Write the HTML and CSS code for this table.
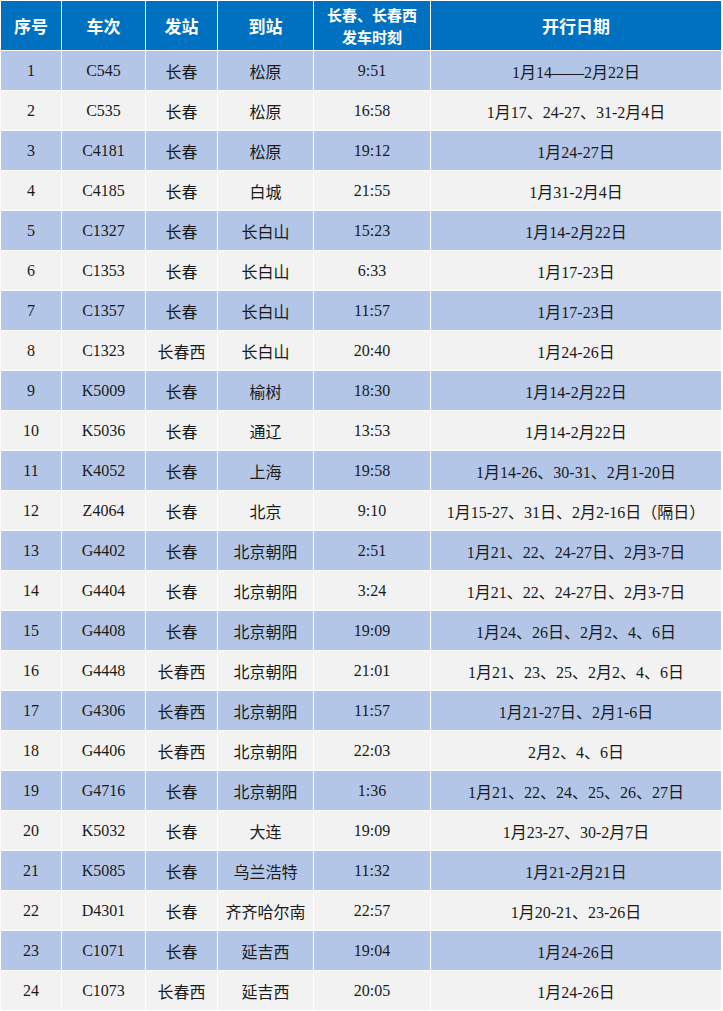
FILE: index.html
```html
<!DOCTYPE html>
<html lang="zh-CN">
<head>
<meta charset="utf-8">
<title>列车时刻</title>
<link rel="stylesheet" href="styles.css">
</head>
<body>
<div class="table">
  <div class="row head">
    <div class="cell">序号</div>
    <div class="cell">车次</div>
    <div class="cell">发站</div>
    <div class="cell">到站</div>
    <div class="cell two"><span class="line">长春、长春西</span><span class="line">发车时刻</span></div>
    <div class="cell">开行日期</div>
  </div>
  <div class="row odd"><div class="cell">1</div><div class="cell">C545</div><div class="cell">长春</div><div class="cell">松原</div><div class="cell">9:51</div><div class="cell">1月14——2月22日</div></div>
  <div class="row even"><div class="cell">2</div><div class="cell">C535</div><div class="cell">长春</div><div class="cell">松原</div><div class="cell">16:58</div><div class="cell">1月17、24-27、31-2月4日</div></div>
  <div class="row odd"><div class="cell">3</div><div class="cell">C4181</div><div class="cell">长春</div><div class="cell">松原</div><div class="cell">19:12</div><div class="cell">1月24-27日</div></div>
  <div class="row even"><div class="cell">4</div><div class="cell">C4185</div><div class="cell">长春</div><div class="cell">白城</div><div class="cell">21:55</div><div class="cell">1月31-2月4日</div></div>
  <div class="row odd"><div class="cell">5</div><div class="cell">C1327</div><div class="cell">长春</div><div class="cell">长白山</div><div class="cell">15:23</div><div class="cell">1月14-2月22日</div></div>
  <div class="row even"><div class="cell">6</div><div class="cell">C1353</div><div class="cell">长春</div><div class="cell">长白山</div><div class="cell">6:33</div><div class="cell">1月17-23日</div></div>
  <div class="row odd"><div class="cell">7</div><div class="cell">C1357</div><div class="cell">长春</div><div class="cell">长白山</div><div class="cell">11:57</div><div class="cell">1月17-23日</div></div>
  <div class="row even"><div class="cell">8</div><div class="cell">C1323</div><div class="cell">长春西</div><div class="cell">长白山</div><div class="cell">20:40</div><div class="cell">1月24-26日</div></div>
  <div class="row odd"><div class="cell">9</div><div class="cell">K5009</div><div class="cell">长春</div><div class="cell">榆树</div><div class="cell">18:30</div><div class="cell">1月14-2月22日</div></div>
  <div class="row even"><div class="cell">10</div><div class="cell">K5036</div><div class="cell">长春</div><div class="cell">通辽</div><div class="cell">13:53</div><div class="cell">1月14-2月22日</div></div>
  <div class="row odd"><div class="cell">11</div><div class="cell">K4052</div><div class="cell">长春</div><div class="cell">上海</div><div class="cell">19:58</div><div class="cell">1月14-26、30-31、2月1-20日</div></div>
  <div class="row even"><div class="cell">12</div><div class="cell">Z4064</div><div class="cell">长春</div><div class="cell">北京</div><div class="cell">9:10</div><div class="cell">1月15-27、31日、2月2-16日（隔日）</div></div>
  <div class="row odd"><div class="cell">13</div><div class="cell">G4402</div><div class="cell">长春</div><div class="cell">北京朝阳</div><div class="cell">2:51</div><div class="cell">1月21、22、24-27日、2月3-7日</div></div>
  <div class="row even"><div class="cell">14</div><div class="cell">G4404</div><div class="cell">长春</div><div class="cell">北京朝阳</div><div class="cell">3:24</div><div class="cell">1月21、22、24-27日、2月3-7日</div></div>
  <div class="row odd"><div class="cell">15</div><div class="cell">G4408</div><div class="cell">长春</div><div class="cell">北京朝阳</div><div class="cell">19:09</div><div class="cell">1月24、26日、2月2、4、6日</div></div>
  <div class="row even"><div class="cell">16</div><div class="cell">G4448</div><div class="cell">长春西</div><div class="cell">北京朝阳</div><div class="cell">21:01</div><div class="cell">1月21、23、25、2月2、4、6日</div></div>
  <div class="row odd"><div class="cell">17</div><div class="cell">G4306</div><div class="cell">长春西</div><div class="cell">北京朝阳</div><div class="cell">11:57</div><div class="cell">1月21-27日、2月1-6日</div></div>
  <div class="row even"><div class="cell">18</div><div class="cell">G4406</div><div class="cell">长春西</div><div class="cell">北京朝阳</div><div class="cell">22:03</div><div class="cell">2月2、4、6日</div></div>
  <div class="row odd"><div class="cell">19</div><div class="cell">G4716</div><div class="cell">长春</div><div class="cell">北京朝阳</div><div class="cell">1:36</div><div class="cell">1月21、22、24、25、26、27日</div></div>
  <div class="row even"><div class="cell">20</div><div class="cell">K5032</div><div class="cell">长春</div><div class="cell">大连</div><div class="cell">19:09</div><div class="cell">1月23-27、30-2月7日</div></div>
  <div class="row odd"><div class="cell">21</div><div class="cell">K5085</div><div class="cell">长春</div><div class="cell">乌兰浩特</div><div class="cell">11:32</div><div class="cell">1月21-2月21日</div></div>
  <div class="row even"><div class="cell">22</div><div class="cell">D4301</div><div class="cell">长春</div><div class="cell">齐齐哈尔南</div><div class="cell">22:57</div><div class="cell">1月20-21、23-26日</div></div>
  <div class="row odd"><div class="cell">23</div><div class="cell">C1071</div><div class="cell">长春</div><div class="cell">延吉西</div><div class="cell">19:04</div><div class="cell">1月24-26日</div></div>
  <div class="row even"><div class="cell">24</div><div class="cell">C1073</div><div class="cell">长春西</div><div class="cell">延吉西</div><div class="cell">20:05</div><div class="cell">1月24-26日</div></div>
</div>
</body>
</html>
```
FILE: styles.css
```css
html, body {
  margin: 0;
  padding: 0;
  background: #ffffff;
}

.table {
  width: 722px;
  box-sizing: border-box;
  padding: 1px;
  background: #ffffff;
  display: flex;
  flex-direction: column;
  gap: 1px;
  font-family: "Liberation Serif", "Noto Sans CJK SC", serif;
  font-size: 16px;
  color: #1a1a1a;
}

.row {
  display: grid;
  grid-template-columns: 60px 83px 71px 95px 116px 290px;
  column-gap: 1px;
  height: 39px;
}

.row.head {
  height: 49px;
}

.cell {
  display: flex;
  align-items: center;
  justify-content: center;
  text-align: center;
  white-space: nowrap;
}

.head .cell {
  background: #0070c0;
  color: #ffffff;
  font-family: "Noto Sans CJK SC", sans-serif;
  font-weight: 700;
  font-size: 17px;
}

.head .cell.two {
  flex-direction: column;
  font-size: 15px;
}

.head .cell.two .line {
  display: block;
  height: 22px;
  line-height: 22px;
}

.odd .cell {
  background: #b4c6e7;
}

.even .cell {
  background: #f2f2f2;
}
```
